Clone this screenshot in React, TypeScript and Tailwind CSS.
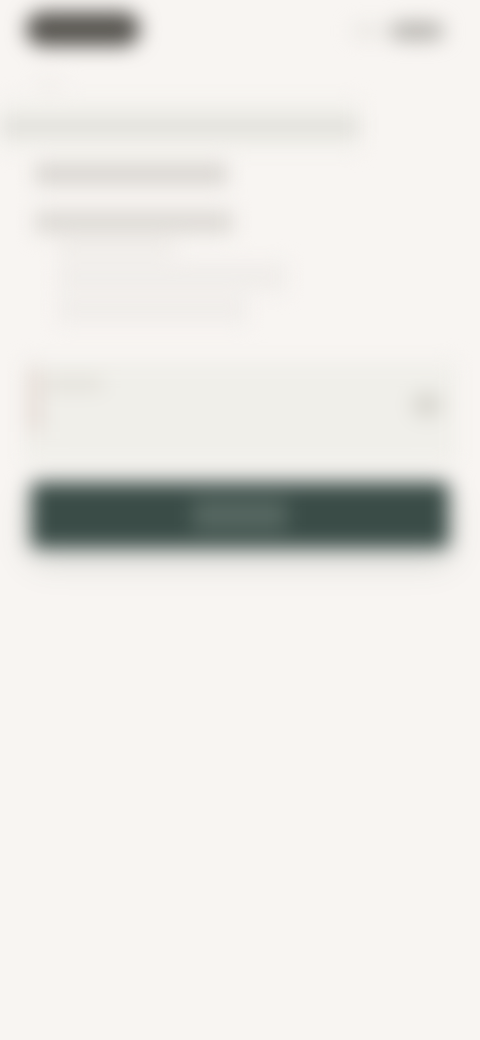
export default function App() {
  return (
    <div className="h-[1040px] w-full overflow-hidden bg-[#f8f5f2]">
      <div className="flex flex-col blur-[10px]">
        <div className="flex h-[58px] items-center justify-between pl-[26px] pr-[36px]">
          <div className="h-[34px] w-[114px] rounded-full bg-[#56544f]" />
          <div className="flex items-center gap-[6px] pt-[4px]">
            <div className="h-[10px] w-[32px] rounded-full bg-[#e4e2dd]" />
            <div className="h-[18px] w-[54px] rounded-full bg-[#b4b2ad]" />
          </div>
        </div>

        <div className="ml-[36px] mt-[24px] h-[6px] w-[26px] bg-[#ebe8e3]" />

        <div className="mt-[13px] flex h-[48px] w-[360px] flex-col justify-center bg-[#f1f0eb]">
          <div className="mt-[4px] h-[14px] w-full bg-[#dddcd7]" />
        </div>

        <div className="flex flex-col items-start pl-[35px]">
          <div className="mt-[12px] flex h-[26px] w-[192px] items-center bg-[#ebe8e4]">
            <div className="h-[14px] w-full bg-[#d3d0cb]" />
          </div>
          <div className="mt-[22px] flex h-[26px] w-[198px] items-center bg-[#ebe8e4]">
            <div className="h-[14px] w-full bg-[#d8d5d0]" />
          </div>
          <div className="ml-[22px] mt-[6px] h-[14px] w-[118px] bg-[#edeae6]" />
          <div className="ml-[22px] mt-[8px] h-[28px] w-[230px] bg-[#f0edea]" />
          <div className="ml-[22px] mt-[6px] h-[26px] w-[190px] bg-[#f0edea]" />
        </div>

        <div className="mx-[24px] mt-[39px] flex h-[102px] items-start justify-between bg-[#f0efea] pl-[4px] pr-[14px] pt-[6px]">
          <div className="flex items-start gap-[5px]">
            <div className="h-[64px] w-[14px] bg-[#e6dcd6]" />
            <div className="mt-[10px] h-[12px] w-[56px] bg-[#e2dfd8]" />
          </div>
          <div className="mt-[25px] h-[24px] w-[30px] rounded-full bg-[#d8d6cf]" />
        </div>

        <div className="mx-[31px] mt-[18px] flex h-[66px] items-center justify-center rounded-[6px] bg-[#3a4c47] shadow-[0_12px_28px_rgba(60,80,72,0.2)]">
          <div className="h-[32px] w-[94px] bg-[#566761]" />
        </div>
      </div>
    </div>
  );
}
